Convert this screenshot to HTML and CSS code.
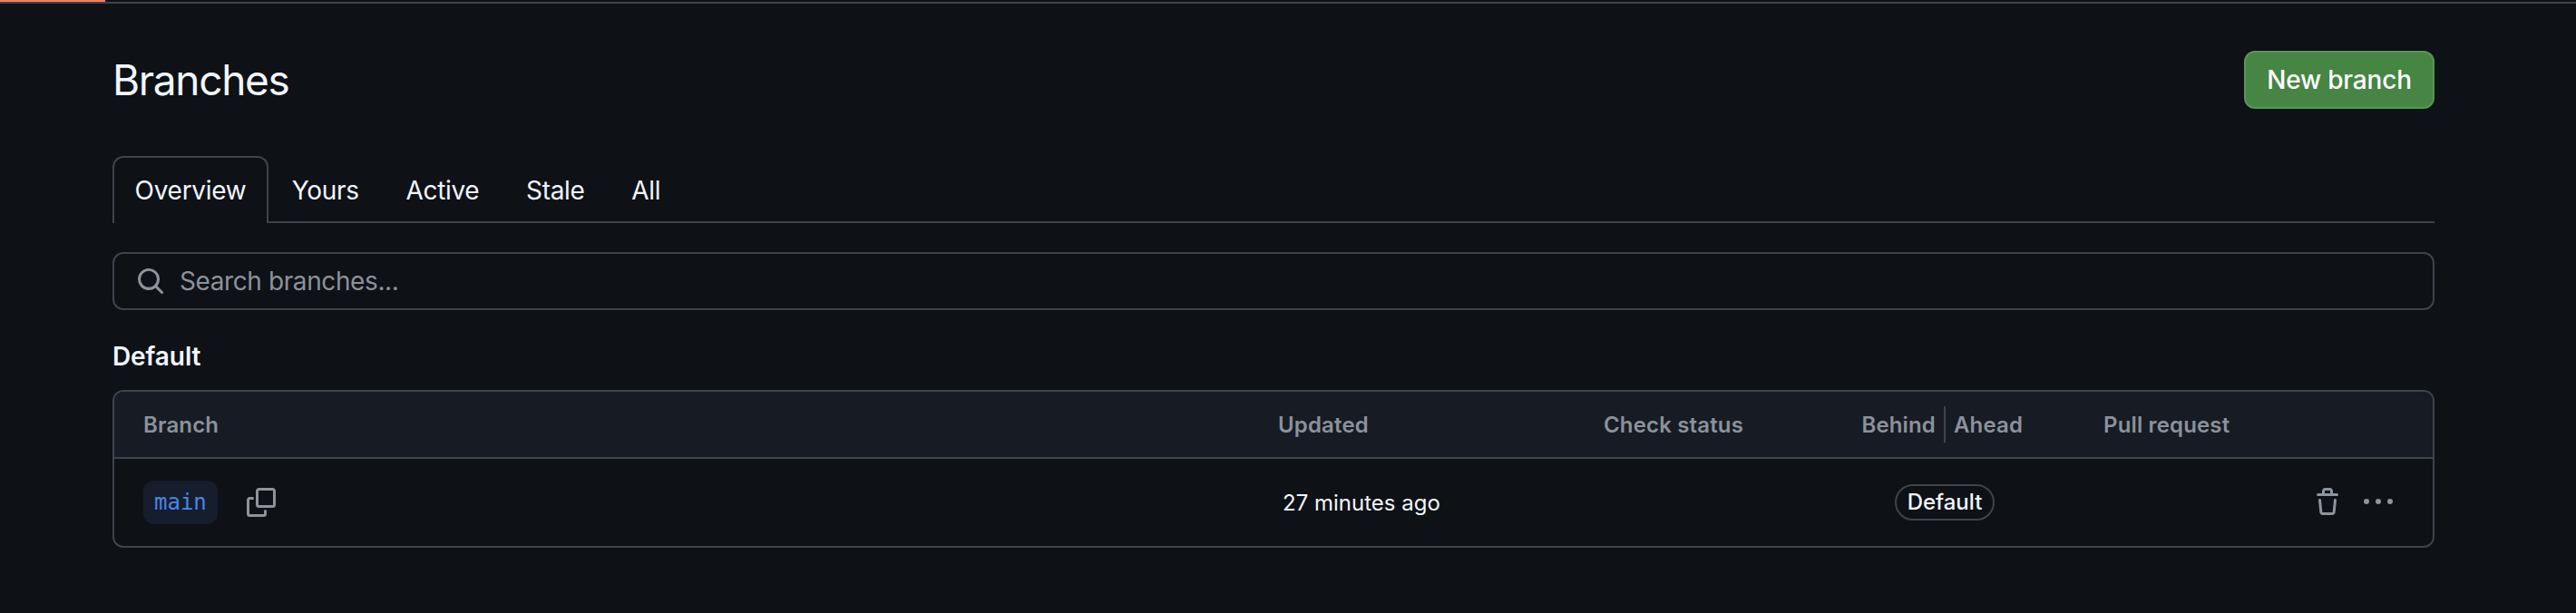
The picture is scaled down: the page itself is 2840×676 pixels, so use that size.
FILE: index.html
```html
<!DOCTYPE html>
<html lang="en">
<head>
    <meta charset="UTF-8">
    <meta name="viewport" content="width=device-width, initial-scale=1.0">
    <title>Branches</title>
    <link rel="stylesheet" href="styles.css">
</head>
<body>
    <div class="progress"><div class="progress-fill"></div></div>
    <div class="container">
        <div class="page-head">
            <h1>Branches</h1>
            <button class="btn-new">New branch</button>
        </div>

        <nav class="tabs">
            <a class="tab selected">Overview</a>
            <a class="tab">Yours</a>
            <a class="tab">Active</a>
            <a class="tab">Stale</a>
            <a class="tab">All</a>
        </nav>

        <div class="search">
            <svg class="icon" viewBox="0 0 16 16"><path d="M10.68 11.74a6 6 0 0 1-7.922-8.982 6 6 0 0 1 8.982 7.922l3.04 3.04a.749.749 0 0 1-.326 1.275.749.749 0 0 1-.734-.215ZM11.5 7a4.499 4.499 0 1 0-8.997 0A4.499 4.499 0 0 0 11.5 7Z"/></svg>
            <span>Search branches...</span>
        </div>

        <h2>Default</h2>

        <div class="table">
            <div class="row head">
                <div class="col-branch">Branch</div>
                <div class="col-updated">Updated</div>
                <div class="col-check">Check status</div>
                <div class="col-diff">
                    <span class="behind">Behind</span>
                    <span class="divider"></span>
                    <span class="ahead">Ahead</span>
                </div>
                <div class="col-pr">Pull request</div>
            </div>
            <div class="row body">
                <div class="col-branch">
                    <code class="branch-name">main</code>
                    <svg class="icon" viewBox="0 0 16 16"><path d="M0 6.75C0 5.784.784 5 1.75 5h1.5a.75.75 0 0 1 0 1.5h-1.5a.25.25 0 0 0-.25.25v7.5c0 .138.112.25.25.25h7.5a.25.25 0 0 0 .25-.25v-1.5a.75.75 0 0 1 1.5 0v1.5A1.75 1.75 0 0 1 9.25 16h-7.5A1.75 1.75 0 0 1 0 14.25Z"/><path d="M5 1.75C5 .784 5.784 0 6.75 0h7.5C15.216 0 16 .784 16 1.75v7.5A1.75 1.75 0 0 1 14.25 11h-7.5A1.75 1.75 0 0 1 5 9.25Zm1.75-.25a.25.25 0 0 0-.25.25v7.5c0 .138.112.25.25.25h7.5a.25.25 0 0 0 .25-.25v-7.5a.25.25 0 0 0-.25-.25Z"/></svg>
                </div>
                <div class="col-updated time">27 minutes ago</div>
                <div class="col-check"></div>
                <div class="col-diff default"><span class="badge">Default</span></div>
                <div class="col-pr"></div>
                <div class="col-actions">
                    <svg class="icon" viewBox="0 0 16 16"><path d="M11 1.75V3h2.25a.75.75 0 0 1 0 1.5H2.75a.75.75 0 0 1 0-1.5H5V1.75C5 .784 5.784 0 6.75 0h2.5C10.216 0 11 .784 11 1.75ZM4.496 6.675l.66 6.6a.25.25 0 0 0 .249.225h5.19a.25.25 0 0 0 .249-.225l.66-6.6a.75.75 0 0 1 1.492.149l-.66 6.6A1.748 1.748 0 0 1 10.595 15h-5.19a1.75 1.75 0 0 1-1.741-1.575l-.66-6.6a.75.75 0 1 1 1.492-.15ZM6.5 1.75V3h3V1.75a.25.25 0 0 0-.25-.25h-2.5a.25.25 0 0 0-.25.25Z"/></svg>
                    <svg class="icon" viewBox="0 0 16 16"><path d="M8 9a1.5 1.5 0 1 0 0-3 1.5 1.5 0 0 0 0 3ZM1.5 9a1.5 1.5 0 1 0 0-3 1.5 1.5 0 0 0 0 3Zm13 0a1.5 1.5 0 1 0 0-3 1.5 1.5 0 0 0 0 3Z"/></svg>
                </div>
            </div>
        </div>
    </div>
</body>
</html>
```

FILE: styles.css
```css
body {
    font-family: 'Inter', 'Liberation Sans', sans-serif;
    margin: 0;
    background-color: #0e1116;
    color: #f0f6fc;
    font-size: 28px;
    letter-spacing: -0.3px;
}
.progress {
    height: 4px;
    box-sizing: border-box;
    border-bottom: 2px solid #3d444d;
}
.progress-fill {
    width: 116px;
    height: 2px;
    background-color: #f0805f;
}
.container {
    padding: 0 156px 0 124px;
}
.page-head {
    display: flex;
    justify-content: space-between;
    align-items: center;
    padding-top: 52px;
    height: 64px;
}
h1 {
    font-size: 46px;
    font-weight: 400;
    letter-spacing: -1.3px;
    margin: 0;
}
.btn-new {
    font-family: inherit;
    font-size: 28px;
    font-weight: 500;
    letter-spacing: -0.2px;
    color: #fff;
    width: 210px;
    height: 64px;
    background-color: #468543;
    border: 2px solid #5a9556;
    border-radius: 12px;
}
.tabs {
    display: flex;
    margin-top: 52px;
    height: 72px;
    border-bottom: 2px solid #3d444d;
}
.tab {
    display: flex;
    align-items: center;
    height: 72px;
    padding: 4px 25.8px 0;
    box-sizing: border-box;
}
.tab.selected {
    width: 172px;
    justify-content: center;
    padding: 0;
    height: 74px;
    border: 2px solid #3d444d;
    border-bottom: none;
    border-radius: 12px 12px 0 0;
    background-color: #0e1116;
}
.search {
    display: flex;
    align-items: center;
    gap: 16px;
    height: 64px;
    margin-top: 32px;
    padding: 0 24px;
    box-sizing: border-box;
    border: 2px solid #3d444d;
    border-radius: 12px;
    color: #8b929b;
    letter-spacing: -0.4px;
}
.icon {
    width: 32px;
    height: 32px;
    fill: #8e949c;
    flex: none;
}
h2 {
    font-size: 28px;
    font-weight: 600;
    letter-spacing: -0.1px;
    line-height: 40px;
    margin: 31px 0 17px;
}
.table {
    border: 2px solid #3d444d;
    border-radius: 12px;
    overflow: hidden;
}
.row {
    display: grid;
    grid-template-columns: 1283px 359px 272px 208px 1fr 132px;
    align-items: center;
}
.row.head {
    height: 72px;
    background-color: #171b24;
    border-bottom: 2px solid #3d444d;
    color: #8b929b;
    font-size: 24px;
    font-weight: 600;
    letter-spacing: 0.15px;
}
.row.body {
    height: 96px;
}
.col-branch {
    display: flex;
    align-items: center;
    gap: 32px;
    padding-left: 32px;
}
.col-diff {
    display: grid;
    grid-template-columns: 1fr 2px 1fr;
    align-items: center;
    column-gap: 9px;
}
.col-diff.default {
    display: flex;
    justify-content: center;
}
.behind {
    text-align: right;
}
.divider {
    height: 40px;
    background-color: #3d444d;
}
.col-pr {
    padding-left: 71px;
}
.branch-name {
    font-family: 'DejaVu Sans Mono', 'Liberation Mono', monospace;
    font-size: 24px;
    letter-spacing: 0;
    line-height: 48px;
    padding: 0 12px;
    color: #4b86e8;
    background-color: #161d2c;
    border-radius: 12px;
}
.time {
    font-size: 24px;
    letter-spacing: 0;
    padding-left: 5px;
}
.badge {
    font-size: 24px;
    font-weight: 500;
    letter-spacing: 0;
    line-height: 36px;
    padding: 0 12px;
    border: 2px solid #3d444d;
    border-radius: 40px;
}
.col-actions {
    display: flex;
    gap: 24px;
}
```
